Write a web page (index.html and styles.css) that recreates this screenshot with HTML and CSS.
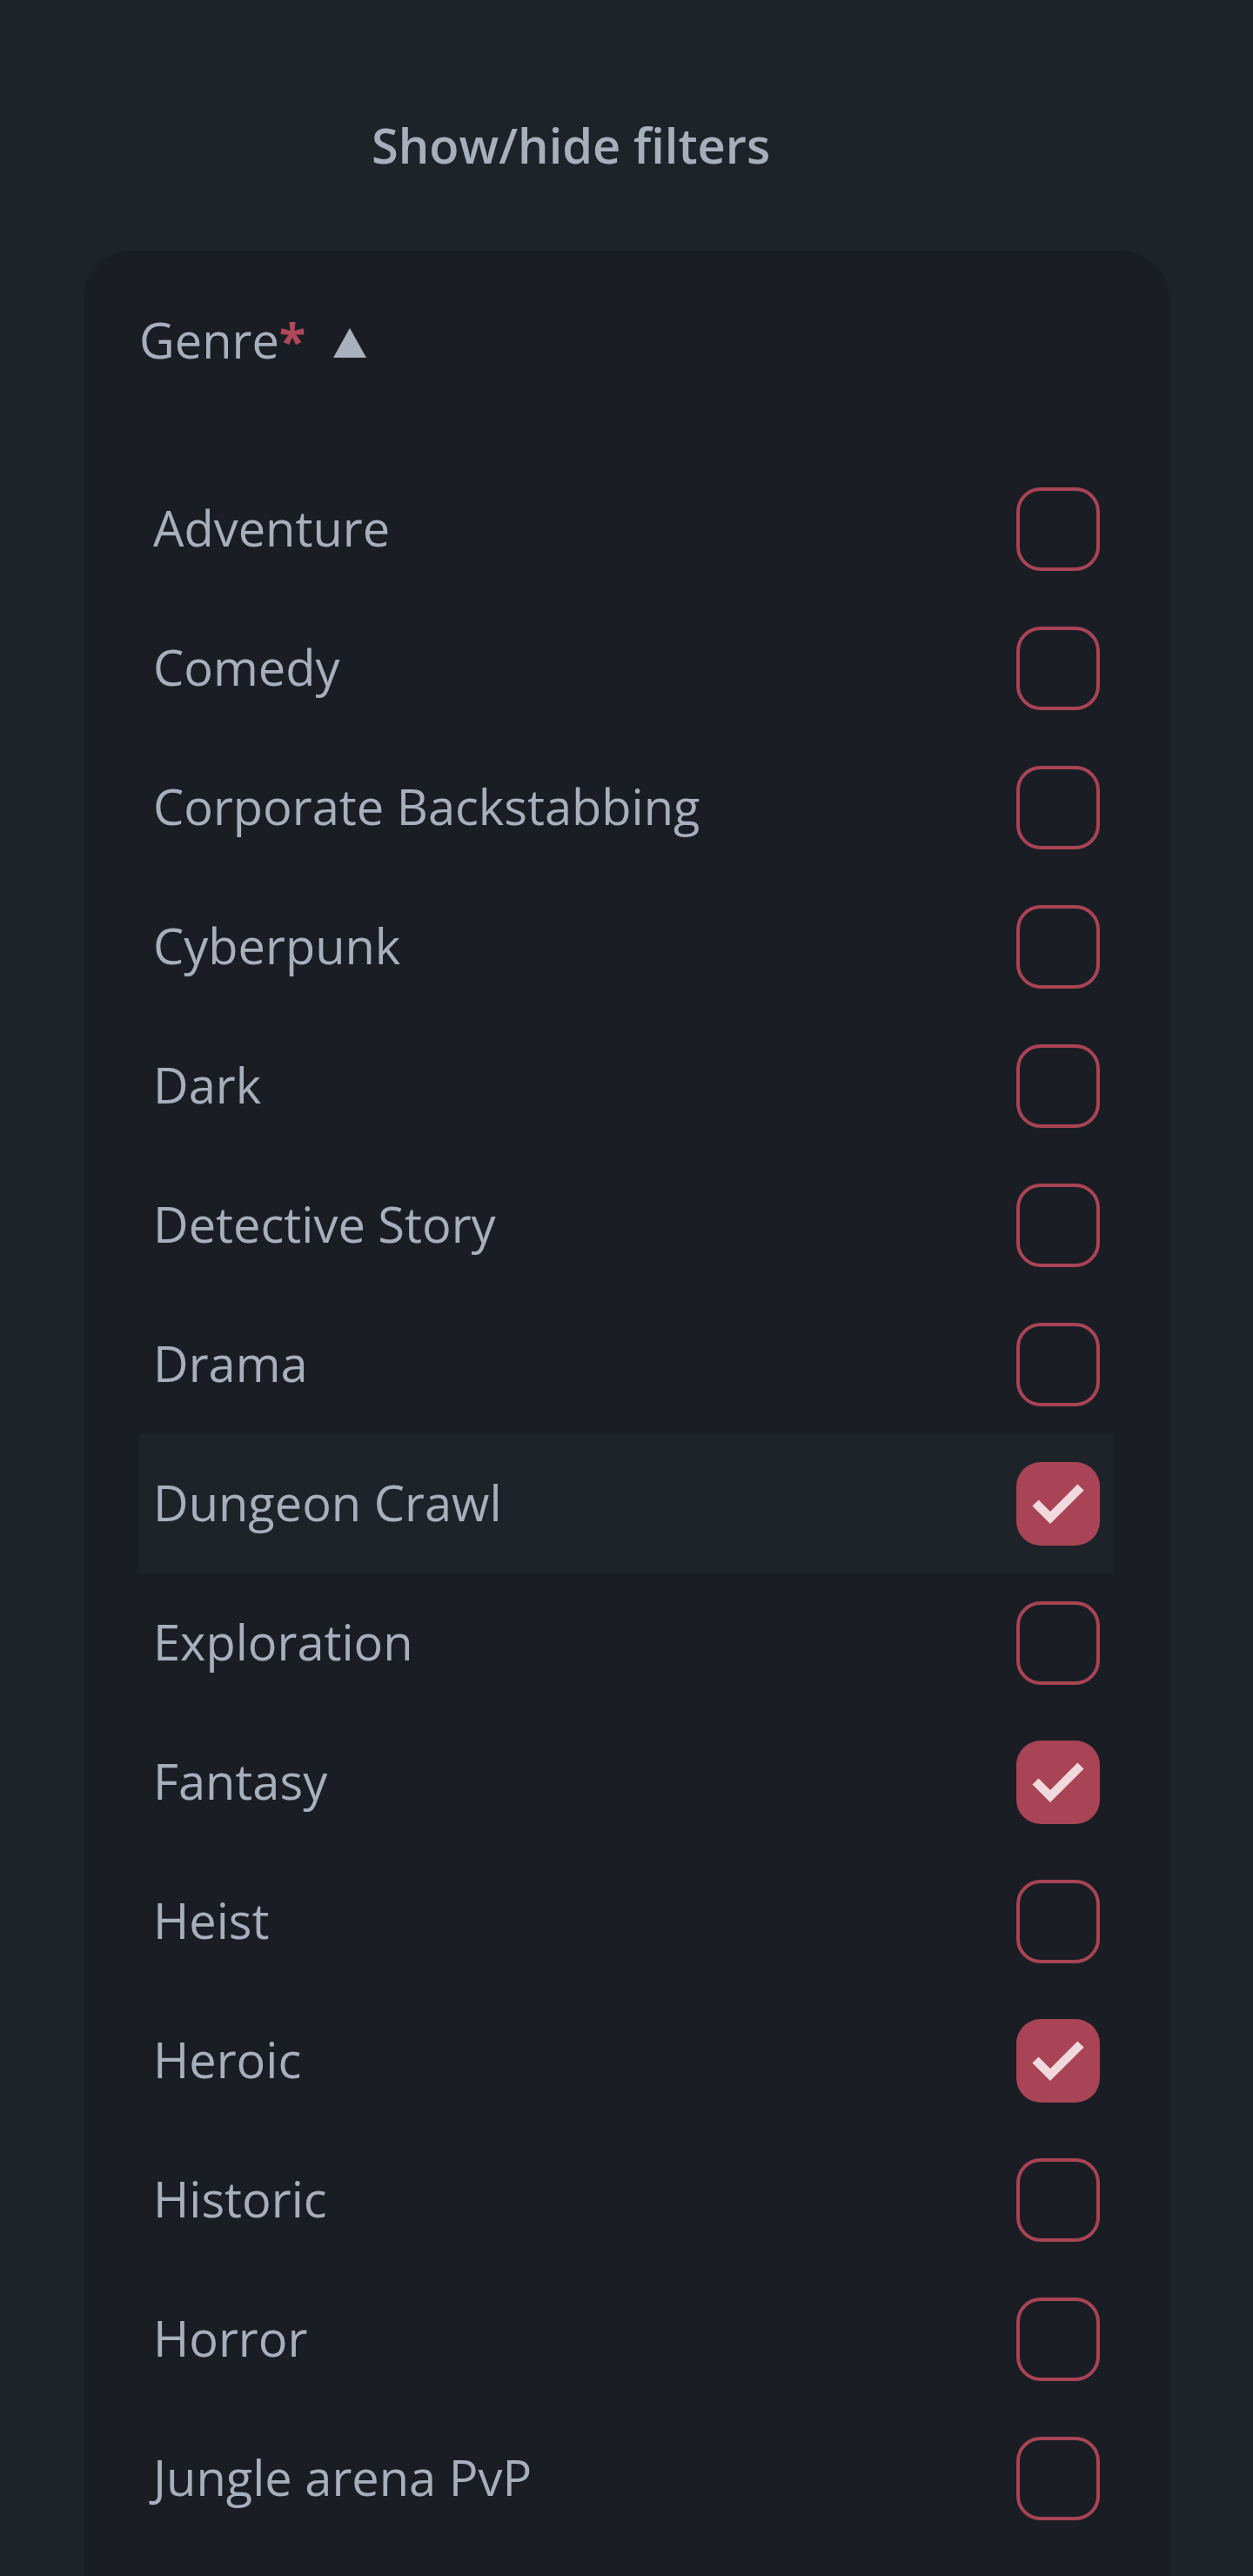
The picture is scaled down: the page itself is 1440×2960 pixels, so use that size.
FILE: index.html
```html
<!DOCTYPE html>
<html lang="en">
<head>
<meta charset="utf-8">
<title>Filters</title>
<link rel="stylesheet" href="styles.css">
</head>
<body>
<div class="page">
  <div class="toggle-bar">
    <button class="toggle-btn" type="button">Show/hide filters</button>
  </div>
  <section class="filter-card">
    <div class="filter-head">
      <span class="filter-title">Genre</span><span class="required">*</span>
      <span class="caret" aria-hidden="true"></span>
    </div>
    <ul class="option-list">
      <li class="option"><span class="option-label">Adventure</span><span class="box"></span></li>
      <li class="option"><span class="option-label">Comedy</span><span class="box"></span></li>
      <li class="option"><span class="option-label">Corporate Backstabbing</span><span class="box"></span></li>
      <li class="option"><span class="option-label">Cyberpunk</span><span class="box"></span></li>
      <li class="option"><span class="option-label">Dark</span><span class="box"></span></li>
      <li class="option"><span class="option-label">Detective Story</span><span class="box"></span></li>
      <li class="option"><span class="option-label">Drama</span><span class="box"></span></li>
      <li class="option option-hover"><span class="option-label">Dungeon Crawl</span><span class="box box-checked"><svg viewBox="0 0 96 96" width="96" height="96"><polyline points="22,47 39,64 74,29" fill="none" stroke="#f1dadd" stroke-width="10" stroke-linejoin="miter"/></svg></span></li>
      <li class="option"><span class="option-label">Exploration</span><span class="box"></span></li>
      <li class="option"><span class="option-label">Fantasy</span><span class="box box-checked"><svg viewBox="0 0 96 96" width="96" height="96"><polyline points="22,47 39,64 74,29" fill="none" stroke="#f1dadd" stroke-width="10" stroke-linejoin="miter"/></svg></span></li>
      <li class="option"><span class="option-label">Heist</span><span class="box"></span></li>
      <li class="option"><span class="option-label">Heroic</span><span class="box box-checked"><svg viewBox="0 0 96 96" width="96" height="96"><polyline points="22,47 39,64 74,29" fill="none" stroke="#f1dadd" stroke-width="10" stroke-linejoin="miter"/></svg></span></li>
      <li class="option"><span class="option-label">Historic</span><span class="box"></span></li>
      <li class="option"><span class="option-label">Horror</span><span class="box"></span></li>
      <li class="option"><span class="option-label">Jungle arena PvP</span><span class="box"></span></li>
    </ul>
  </section>
</div>
</body>
</html>
```

FILE: styles.css
```css
* {
  box-sizing: border-box;
}

html, body {
  margin: 0;
  padding: 0;
  background: #1e232a;
}

body {
  font-family: "Open Sans", "Noto Sans", sans-serif;
  color: #a8afbc;
}

.page {
  padding-top: 128px;
}

.toggle-bar {
  display: flex;
  padding-left: 427px;
  margin-bottom: 84px;
}

.toggle-btn {
  background: none;
  border: 0;
  padding: 0;
  margin: 0;
  font-family: inherit;
  font-size: 56px;
  font-weight: 600;
  line-height: 76px;
  color: #a8afbc;
}

.filter-card {
  margin: 0 96px;
  background: #1a1d24;
  border-radius: 56px 56px 0 0;
  padding: 64px 64px 64px;
}

.filter-head {
  display: flex;
  align-items: baseline;
  height: 76px;
  line-height: 76px;
  font-size: 56px;
  margin-bottom: 100px;
}

.filter-title {
  color: #a8afbc;
}

.required {
  color: #b0485a;
  font-weight: 700;
}

.caret {
  width: 0;
  height: 0;
  margin-left: 32px;
  border-left: 19px solid transparent;
  border-right: 19px solid transparent;
  border-bottom: 34px solid #a8b0bd;
  align-self: center;
  position: relative;
  top: 4px;
}

.option-list {
  list-style: none;
  margin: 0;
  padding: 0;
}

.option {
  display: flex;
  align-items: center;
  justify-content: space-between;
  height: 160px;
  padding: 0 16px;
}

.option-hover {
  background: #1e232a;
}

.option-label {
  font-size: 56px;
  line-height: 76px;
  margin-bottom: 4px;
  color: #a8afbc;
}

.box {
  display: block;
  width: 96px;
  height: 96px;
  border: 4px solid #a84455;
  border-radius: 28px;
  flex: none;
  overflow: hidden;
}

.box-checked {
  background: #a84455;
  border: 0;
}

.box-checked svg {
  display: block;
}
```
